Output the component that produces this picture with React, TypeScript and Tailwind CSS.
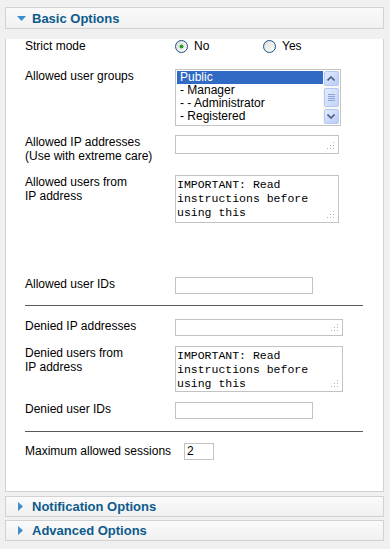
const font = "font-['Liberation_Sans',Arial,sans-serif]";
const mono = "font-['Liberation_Mono','Courier_New',monospace]";

function Grip() {
  return (
    <svg width="8" height="8" viewBox="0 0 8 8" className="absolute right-[3px] bottom-[3px]">
      <rect x="6" y="0" width="1" height="1" fill="#b0b0b0" />
      <rect x="3" y="3" width="1" height="1" fill="#b0b0b0" />
      <rect x="6" y="3" width="1" height="1" fill="#b0b0b0" />
      <rect x="0" y="6" width="1" height="1" fill="#b0b0b0" />
      <rect x="3" y="6" width="1" height="1" fill="#b0b0b0" />
      <rect x="6" y="6" width="1" height="1" fill="#b0b0b0" />
    </svg>
  );
}

function Radio({ checked }: { checked?: boolean }) {
  return (
    <svg width="13" height="13" viewBox="0 0 13 13">
      <defs>
        <linearGradient id={checked ? "rg1" : "rg2"} x1="0" y1="0" x2="1" y2="1">
          <stop offset="0" stopColor="#dcdcd6" />
          <stop offset="1" stopColor="#ffffff" />
        </linearGradient>
      </defs>
      <circle cx="6.5" cy="6.5" r="6" fill={`url(#${checked ? "rg1" : "rg2"})`} stroke="#1c5180" strokeWidth="1" />
      {checked && <circle cx="6.5" cy="6.5" r="2" fill="#21a121" />}
    </svg>
  );
}

function Arrow({ dir }: { dir: "up" | "down" }) {
  return (
    <div className="w-[15px] h-[15px] rounded-[2px] border border-[#b5c8f3] bg-gradient-to-br from-[#e3ebfd] to-[#b9cbf5] flex items-center justify-center">
      <svg width="8" height="5" viewBox="0 0 8 5">
        <path d={dir === "up" ? "M0.5 4.5 L4 1 L7.5 4.5" : "M0.5 0.5 L4 4 L7.5 0.5"} fill="none" stroke="#4d6185" strokeWidth="1.6" />
      </svg>
    </div>
  );
}

function Header({ title, open }: { title: string; open?: boolean }) {
  return (
    <div className={`${open ? "h-[22px]" : "h-[21px]"} border border-[#d2d2d2] bg-gradient-to-b from-[#fafafa] to-[#f1f1f1] flex items-center pl-[11px]`}>
      {open ? (
        <svg width="9" height="5" viewBox="0 0 9 5" className="mr-[6px] mt-[1px]">
          <path d="M0 0 L9 0 L4.5 5 Z" fill="#3b8fcc" />
        </svg>
      ) : (
        <svg width="5" height="9" viewBox="0 0 5 9" className="ml-[1px] mr-[9px]">
          <path d="M0 0 L5 4.5 L0 9 Z" fill="#3b8fcc" />
        </svg>
      )}
      <span className="text-[13px] font-bold text-[#0d5b8c] leading-none">{title}</span>
    </div>
  );
}

function Row({ label, children, className = "" }: { label: React.ReactNode; children: React.ReactNode; className?: string }) {
  return (
    <div className={`flex items-start ${className}`}>
      <div className="w-[150px] shrink-0 text-[12px] leading-[14px] text-black">{label}</div>
      {children}
    </div>
  );
}

function Box({ w, h, grip }: { w: number; h: number; grip?: boolean }) {
  return (
    <div className="relative border border-[#c3c3c3] bg-white" style={{ width: w, height: h }}>
      {grip && <Grip />}
    </div>
  );
}

function Area({ w, h }: { w: number; h: number }) {
  return (
    <div className={`relative border border-[#c3c3c3] bg-white pl-[1px] pt-[2px] ${mono} text-[11.5px] leading-[14px] text-black`} style={{ width: w, height: h }}>
      <div>IMPORTANT: Read</div>
      <div>instructions before</div>
      <div>using this</div>
      <Grip />
    </div>
  );
}

export default function App() {
  return (
    <div className={`${font} bg-[#f0f0f0] w-[390px] h-[549px] pt-[7px] pl-[5px] pr-[6px]`}>
      <Header title="Basic Options" open />
      <div className="border border-t-0 border-[#d2d2d2] bg-white pl-[19px] pb-[31px]">
        <Row label="Strict mode" className="mt-[10px]">
          <div className="flex items-center h-[14px] text-[12px]">
            <div className="flex items-center gap-[6px] w-[88px]">
              <Radio checked />
              <span>No</span>
            </div>
            <div className="flex items-center gap-[6px]">
              <Radio />
              <span>Yes</span>
            </div>
          </div>
        </Row>

        <Row label="Allowed user groups" className="mt-[16px]">
          <div className="w-[166px] h-[57px] border border-[#c3c3c3] bg-white flex p-[1px]">
            <div className="flex-1 text-[12px] leading-[13px]">
              <div className="bg-[#316ac5] text-white pl-[3px]">Public</div>
              <div className="pl-[3px]">- Manager</div>
              <div className="pl-[3px]">- - Administrator</div>
              <div className="pl-[3px]">- Registered</div>
            </div>
            <div className="w-[16px] flex flex-col items-center justify-between bg-[#f7f7f4]">
              <Arrow dir="up" />
              <div className="w-[15px] h-[19px] rounded-[2px] border border-[#b5c8f3] bg-gradient-to-br from-[#e3ebfd] to-[#c3d3f7] flex flex-col items-center justify-center gap-[1px]">
                <div className="w-[7px] h-px bg-[#8da3d6]" />
                <div className="w-[7px] h-px bg-[#8da3d6]" />
                <div className="w-[7px] h-px bg-[#8da3d6]" />
                <div className="w-[7px] h-px bg-[#8da3d6]" />
              </div>
              <Arrow dir="down" />
            </div>
          </div>
        </Row>

        <Row
          label={
            <>
              Allowed IP addresses
              <br />
              (Use with extreme care)
            </>
          }
          className="mt-[9px]"
        >
          <Box w={164} h={19} grip />
        </Row>

        <Row
          label={
            <>
              Allowed users from
              <br />
              IP address
            </>
          }
          className="mt-[12px]"
        >
          <Area w={164} h={48} />
        </Row>

        <Row label="Allowed user IDs" className="mt-[54px]">
          <Box w={138} h={17} />
        </Row>

        <div className="mt-[11px] mr-[20px] border-t border-[#5a5a5a]" />

        <Row label="Denied IP addresses" className="mt-[13px]">
          <Box w={168} h={17} grip />
        </Row>

        <Row
          label={
            <>
              Denied users from
              <br />
              IP address
            </>
          }
          className="mt-[10px]"
        >
          <Area w={168} h={46} />
        </Row>

        <Row label="Denied user IDs" className="mt-[10px]">
          <Box w={138} h={17} />
        </Row>

        <div className="mt-[12px] mr-[20px] border-t border-[#5a5a5a]" />

        <div className="mt-[10px] flex items-center text-[12px]">
          <span className="w-[159px] shrink-0">Maximum allowed sessions</span>
          <div className="w-[30px] h-[17px] border border-[#c3c3c3] bg-white pl-[2px] leading-[15px]">2</div>
        </div>
      </div>

      <div className="mt-[4px]">
        <Header title="Notification Options" />
      </div>
      <div className="mt-[3px]">
        <Header title="Advanced Options" />
      </div>
    </div>
  );
}
